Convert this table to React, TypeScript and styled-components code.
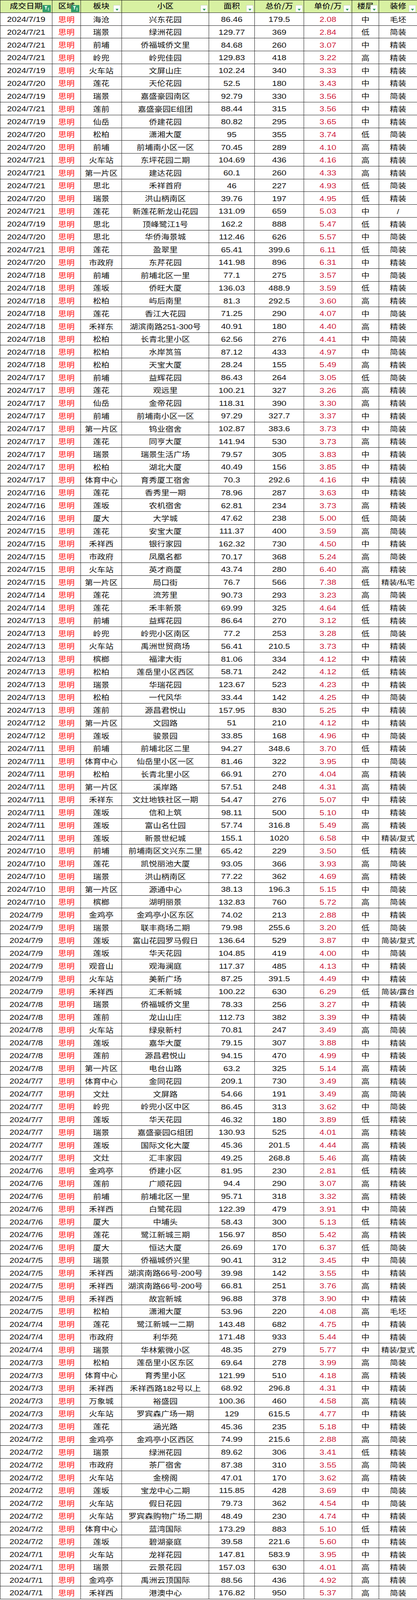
import React from "react";
import styled, { createGlobalStyle } from "styled-components";

/* The browser window is 4096px tall while the picture is 1067x4752,
   so every vertical measure is scaled by 4096 / 4752. */
const K = 4096 / 4752;
const ROW = 38 * K;

const GlobalStyle = createGlobalStyle`
  html, body { margin: 0; padding: 0; background: #ffffff; }
  body { font-family: "Liberation Sans", "Noto Sans CJK SC", sans-serif; }
`;

const Sheet = styled.div`
  display: grid;
  width: 1067px;
  grid-template-columns: 133px 73px 105px 223px 117px 126px 123px 69px 98px;
  grid-auto-rows: ${ROW}px;
  box-sizing: border-box;
  border-left: 1px solid #1a1a1a;
  font-family: "Liberation Sans", "Noto Sans CJK SC", sans-serif;
  line-height: 1;
  color: #111111;
`;

const Row = styled.div`
  display: contents;
`;

const HeadCell = styled.div`
  position: relative;
  display: flex;
  align-items: center;
  justify-content: center;
  box-sizing: border-box;
  background: #d8f1a2;
  border-top: 1px solid #1a1a1a;
  border-right: 1px solid #1a1a1a;
  border-bottom: 1px solid #1a1a1a;
  font-family: "Noto Sans CJK SC", sans-serif;
  font-weight: 500;
  font-size: 21px;
  color: #1a1a1a;
  padding-bottom: 3px;
  white-space: nowrap;
  overflow: hidden;
`;

const Text = styled.span`
  display: inline-block;
  white-space: nowrap;
  transform: scaleY(${K});
`;

const DropBtn = styled.span<{ $active?: boolean }>`
  position: absolute;
  right: 3px;
  bottom: 1px;
  width: ${(p) => (p.$active ? "21px" : "18px")};
  height: 18px;
  box-sizing: border-box;
  background: ${(p) => (p.$active ? "#2f9e6c" : "#ffffff")};
  border: 1px solid ${(p) => (p.$active ? "#2a8f61" : "#c9d3c5")};
  display: flex;
  align-items: flex-end;
  justify-content: center;
  padding-bottom: 2px;
`;

const Cell = styled.div<{ $tone?: "red" | "price"; $num?: boolean; $tight?: boolean }>`
  display: flex;
  align-items: center;
  justify-content: center;
  box-sizing: border-box;
  border-right: 1px solid #1a1a1a;
  border-bottom: 1px solid #1a1a1a;
  white-space: nowrap;
  overflow: hidden;
  padding-top: 3px;
  font-size: ${(p) => (p.$num ? "22px" : p.$tight ? "20px" : "21px")};
  color: ${(p) =>
    p.$tone === "red" ? "#ff1010" : p.$tone === "price" ? "#cf2240" : "#111111"};
`;

const FilterIcon = () => (
  <svg width="13" height="13" viewBox="0 0 13 15" preserveAspectRatio="none">
    <path d="M0.5 0.5 H8.5 L5.5 5 V10 L3.5 11.5 V5 Z" fill="#ffffff" />
    <rect x="9.5" y="6" width="3" height="1.6" fill="#ffffff" />
    <rect x="9.5" y="9" width="3" height="1.6" fill="#ffffff" />
    <rect x="9.5" y="12" width="3" height="1.6" fill="#ffffff" />
  </svg>
);

const DropIcon = () => (
  <svg width="9" height="6" viewBox="0 0 9 7" preserveAspectRatio="none">
    <path d="M0.5 0.5 H8.5 L4.5 6.5 Z" fill="#27a05c" />
  </svg>
);

const headers: { label: string; active?: boolean }[] = [
  { label: "成交日期", active: true },
  { label: "区域", active: true },
  { label: "板块" },
  { label: "小区" },
  { label: "面积" },
  { label: "总价/万" },
  { label: "单价/万" },
  { label: "楼层" },
  { label: "装修" },
];

const raw = `7/19 海沧 兴东花园 86.46 179.5 2.08 中 毛坯
7/21 瑞景 绿洲花园 129.77 369 2.84 低 简装
7/21 前埔 侨福城侨文里 84.68 260 3.07 中 精装
7/21 岭兜 岭兜佳园 129.83 418 3.22 高 精装
7/19 火车站 文屏山庄 102.24 340 3.33 中 精装
7/20 莲花 天伦花园 52.5 180 3.43 中 精装
7/19 瑞景 嘉盛豪园南区 92.79 330 3.56 中 简装
7/21 莲前 嘉盛豪园E组团 88.44 315 3.56 中 精装
7/19 仙岳 侨建花园 80.82 295 3.65 中 精装
7/20 松柏 潇湘大厦 95 355 3.74 低 简装
7/20 前埔 前埔南小区一区 70.45 289 4.10 高 精装
7/21 火车站 东坪花园二期 104.69 436 4.16 高 精装
7/21 第一片区 建达花园 60.1 260 4.33 高 精装
7/21 思北 禾祥首府 46 227 4.93 低 简装
7/20 瑞景 洪山柄南区 39.76 197 4.95 低 精装
7/21 莲花 新莲花新龙山花园 131.09 659 5.03 中 /
7/19 思北 顶峰鹭江1号 162.2 888 5.47 低 精装
7/20 思北 华侨海景城 112.46 626 5.57 中 简装
7/21 莲花 盈翠里 65.41 399.6 6.11 低 简装
7/20 市政府 东芹花园 141.98 896 6.31 中 精装
7/18 前埔 前埔北区一里 77.1 275 3.57 中 简装
7/18 莲坂 侨旺大厦 136.03 488.9 3.59 低 精装
7/18 松柏 屿后南里 81.3 292.5 3.60 高 精装
7/18 莲花 香江大花园 71.25 290 4.07 中 简装
7/18 禾祥东 湖滨南路251-300号 40.91 180 4.40 高 精装
7/18 松柏 长青北里小区 62.56 276 4.41 中 简装
7/18 松柏 水岸筼筜 87.12 433 4.97 中 简装
7/18 松柏 天宝大厦 28.24 155 5.49 高 精装
7/17 前埔 益辉花园 86.43 264 3.05 低 简装
7/17 莲花 观远里 100.21 327 3.26 高 精装
7/17 仙岳 金帝花园 118.31 390 3.30 高 精装
7/17 前埔 前埔南小区一区 97.29 327.7 3.37 中 精装
7/17 第一片区 钨业宿舍 102.87 383.6 3.73 中 简装
7/17 莲花 同亨大厦 141.94 530 3.73 高 精装
7/17 瑞景 瑞景生活广场 79.57 305 3.83 中 精装
7/17 松柏 湖北大厦 40.49 156 3.85 中 精装
7/17 体育中心 育秀厦工宿舍 70.3 292.6 4.16 中 精装
7/16 莲花 香秀里一期 78.96 287 3.63 中 精装
7/16 莲坂 农机宿舍 62.81 234 3.73 高 精装
7/16 厦大 大学城 47.62 238 5.00 低 简装
7/15 莲花 安宝大厦 111.37 400 3.59 高 简装
7/15 禾祥西 银行家园 162.32 730 4.50 中 精装
7/15 市政府 凤凰名都 70.17 368 5.24 高 简装
7/15 火车站 英才商厦 43.74 280 6.40 高 精装
7/15 第一片区 局口街 76.7 566 7.38 低 精装/私宅
7/14 莲花 流芳里 90.73 293 3.23 高 简装
7/14 莲花 禾丰新景 69.99 325 4.64 低 精装
7/13 前埔 益辉花园 86.64 270 3.12 低 精装
7/13 岭兜 岭兜小区南区 77.2 253 3.28 低 简装
7/13 火车站 禹洲世贸商场 56.41 210.5 3.73 中 精装
7/13 槟榔 福津大街 81.06 334 4.12 中 精装
7/13 松柏 莲岳里小区西区 58.71 242 4.12 低 精装
7/13 瑞景 华瑞花园 123.67 523 4.23 中 精装
7/13 松柏 一代风华 33.44 142 4.25 中 简装
7/13 莲前 源昌君悦山 157.95 830 5.25 中 精装
7/12 第一片区 文园路 51 210 4.12 中 精装
7/12 莲坂 骏景园 33.85 168 4.96 中 简装
7/11 前埔 前埔北区二里 94.27 348.6 3.70 低 精装
7/11 体育中心 仙岳里小区一区 81.46 322 3.95 中 简装
7/11 松柏 长青北里小区 66.91 270 4.04 高 精装
7/11 第一片区 溪岸路 57.51 248 4.31 高 精装
7/11 禾祥东 文灶地铁社区一期 54.47 276 5.07 中 精装
7/11 莲坂 信和上筑 98.11 500 5.10 中 精装
7/11 莲坂 富山名仕园 57.74 316.8 5.49 高 精装
7/11 莲坂 新景世纪城 155.1 1020 6.58 中 精装/复式
7/10 前埔 前埔南区文兴东二里 65.42 229 3.50 低 精装
7/10 莲花 凯悦丽池大厦 93.05 366 3.93 高 简装
7/10 瑞景 洪山柄南区 77.22 362 4.69 高 精装
7/10 第一片区 源通中心 38.13 196.3 5.15 中 简装
7/10 槟榔 湖明丽景 132.83 760 5.72 高 简装
7/9 金鸡亭 金鸡亭小区东区 74.02 213 2.88 中 精装
7/9 瑞景 联丰商场二期 79.98 255.6 3.20 低 简装
7/9 莲坂 富山花园罗马假日 136.64 529 3.87 中 简装/复式
7/9 莲坂 华天花园 104.85 419 4.00 中 简装
7/9 观音山 观海澜庭 117.37 485 4.13 中 精装
7/9 火车站 美新广场 87.25 391.5 4.49 中 精装
7/9 禾祥西 汇禾新城 100.22 630 6.29 低 简装/露台
7/8 瑞景 侨福城侨文里 78.33 256 3.27 中 精装
7/8 莲前 龙山山庄 112.73 382 3.39 中 精装
7/8 火车站 绿泉新村 70.81 247 3.49 高 简装
7/8 莲坂 嘉华大厦 79.15 307 3.88 中 精装
7/8 莲前 源昌君悦山 94.15 470 4.99 中 精装
7/8 第一片区 电台山路 63.2 325 5.14 高 精装
7/7 体育中心 金同花园 209.1 730 3.49 高 精装
7/7 文灶 文屏路 54.66 191 3.49 高 简装
7/7 岭兜 岭兜小区中区 86.45 313 3.62 中 简装
7/7 莲坂 华天花园 46.32 180 3.89 低 精装
7/7 瑞景 嘉盛豪园G组团 130.93 525 4.01 高 精装
7/7 莲坂 国际文化大厦 45.36 201.5 4.44 高 精装
7/7 文灶 汇丰家园 49.25 268.8 5.46 高 精装
7/6 金鸡亭 侨建小区 81.95 230 2.81 低 精装
7/6 莲前 广顺花园 94.4 290 3.07 高 精装
7/6 前埔 前埔北区一里 95.71 318 3.32 高 精装
7/6 禾祥西 白鹭花园 122.39 479 3.91 中 简装
7/6 厦大 中埔头 58.43 300 5.13 低 精装
7/6 莲花 鹭江新城三期 156.97 850 5.42 高 精装
7/6 厦大 恒达大厦 26.69 170 6.37 低 简装
7/5 瑞景 侨福城侨兴里 90.41 312 3.45 中 简装
7/5 禾祥西 湖滨南路66号-200号 39.98 142 3.55 中 精装
7/5 禾祥西 湖滨南路66号-200号 66.81 251 3.76 高 精装
7/5 禾祥西 故宫新城 96.88 378 3.90 中 精装
7/5 松柏 潇湘大厦 53.96 220 4.08 高 毛坯
7/4 莲花 鹭江新城一二期 143.48 682 4.75 中 精装
7/4 市政府 利华苑 171.48 933 5.44 中 精装
7/4 瑞景 华林紫微小区 48.35 279 5.77 中 精装/复式
7/3 松柏 莲岳里小区东区 69.64 278 3.99 高 简装
7/3 体育中心 育秀里小区 121.99 510 4.18 高 精装
7/3 禾祥西 禾祥西路182号以上 68.92 296.8 4.31 中 精装
7/3 万象城 裕盛园 100.36 460 4.58 高 精装
7/3 火车站 罗宾森广场一期 129 615.5 4.77 中 精装
7/3 莲花 涵光路 45.36 235 5.18 中 精装
7/2 金鸡亭 金鸡亭小区西区 74.99 215.6 2.88 高 简装
7/2 瑞景 绿洲花园 89.62 306 3.41 低 精装
7/2 市政府 茶厂宿舍 87.38 310 3.55 高 简装
7/2 火车站 金榜阁 47.01 170 3.62 高 精装
7/2 莲坂 宝龙中心二期 115.85 428 3.69 中 简装
7/2 火车站 假日花园 79.73 362 4.54 中 简装
7/2 火车站 罗宾森购物广场二期 48.49 230 4.74 中 精装
7/2 体育中心 蓝湾国际 173.29 883 5.10 低 精装
7/2 莲坂 碧湖豪庭 39.58 221.6 5.60 中 精装
7/1 火车站 龙祥花园 147.81 583.9 3.95 中 精装
7/1 瑞景 云景花园 157.03 630 4.01 高 精装
7/1 金鸡亭 禹洲云顶国际 88.56 436 4.92 高 精装
7/1 禾祥西 港澳中心 176.82 950 5.37 高 简装`;

type Deal = {
  date: string;
  block: string;
  estate: string;
  area: string;
  total: string;
  unit: string;
  floor: string;
  deco: string;
};

const deals: Deal[] = raw.split("\n").map((line) => {
  const [date, block, estate, area, total, unit, floor, deco] = line.trim().split(" ");
  return { date: "2024/" + date, block, estate, area, total, unit, floor, deco };
});

export default function App() {
  return (
    <>
      <GlobalStyle />
      <Sheet>
        <Row>
          {headers.map((h) => (
            <HeadCell key={h.label}>
              <Text>{h.label}</Text>
              <DropBtn $active={h.active}>{h.active ? <FilterIcon /> : <DropIcon />}</DropBtn>
            </HeadCell>
          ))}
        </Row>
        {deals.map((d, i) => (
          <Row key={i}>
            <Cell $num><Text>{d.date}</Text></Cell>
            <Cell $tone="red"><Text>思明</Text></Cell>
            <Cell><Text>{d.block}</Text></Cell>
            <Cell><Text>{d.estate}</Text></Cell>
            <Cell $num><Text>{d.area}</Text></Cell>
            <Cell $num><Text>{d.total}</Text></Cell>
            <Cell $num $tone="price"><Text>{d.unit}</Text></Cell>
            <Cell><Text>{d.floor}</Text></Cell>
            <Cell $tight={d.deco.length > 2}><Text>{d.deco}</Text></Cell>
          </Row>
        ))}
      </Sheet>
    </>
  );
}
